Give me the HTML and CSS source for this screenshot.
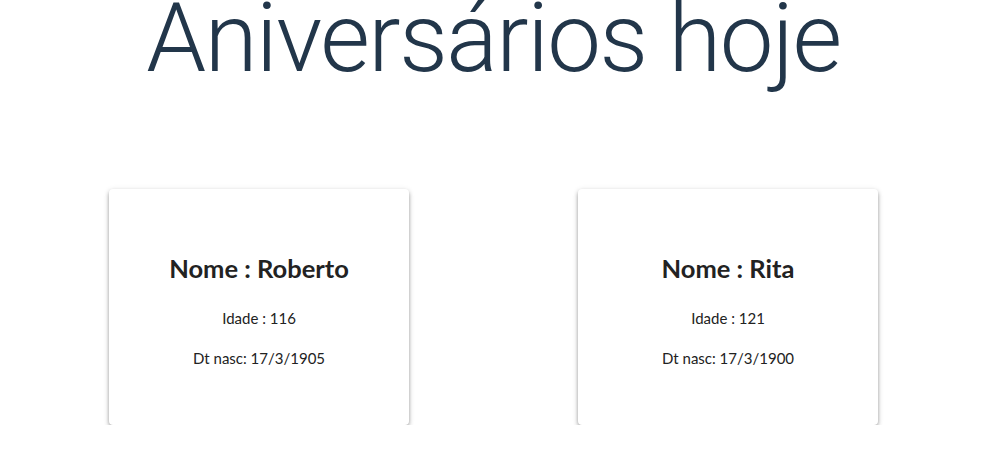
FILE: index.html
```html
<!DOCTYPE html>
<html lang="pt">
<head>
<meta charset="utf-8">
<title>Aniversários hoje</title>
<link rel="stylesheet" href="styles.css">
</head>
<body>
<div class="app">
  <h1 class="title">Aniversários hoje</h1>
  <div class="cards">
    <div class="card">
      <h2 class="card-name">Nome : Roberto</h2>
      <p class="card-line">Idade : 116</p>
      <p class="card-line">Dt nasc: 17/3/1905</p>
    </div>
    <div class="card">
      <h2 class="card-name">Nome : Rita</h2>
      <p class="card-line">Idade : 121</p>
      <p class="card-line">Dt nasc: 17/3/1900</p>
    </div>
  </div>
</div>
</body>
</html>
```

FILE: styles.css
```css
html, body {
  margin: 0;
  padding: 0;
  background: #ffffff;
}
body {
  overflow: hidden;
}
.app {
  width: 987px;
  font-family: Lato, "Open Sans", sans-serif;
  color: #2c3e50;
}
.title {
  margin: 0;
  font-family: Roboto, sans-serif;
  font-weight: 300;
  font-size: 96px;
  line-height: 76px;
  letter-spacing: -1.5px;
  text-align: center;
  color: #22364a;
}
.cards {
  display: flex;
  justify-content: center;
  gap: 169px;
  margin-top: 113px;
}
.card {
  width: 300px;
  height: 236px;
  box-sizing: border-box;
  padding-top: 6px;
  background: #fff;
  border-radius: 4px;
  box-shadow: 0 2px 4px -1px rgba(0,0,0,.35), 0 3px 5px 0 rgba(0,0,0,.14), 0 1px 6px 0 rgba(0,0,0,.1);
  display: flex;
  flex-direction: column;
  align-items: center;
  justify-content: center;
  text-align: center;
  color: #222;
}
.card-name {
  margin: 0 0 25px;
  font-size: 25.5px;
  font-weight: 700;
  line-height: 30px;
  color: #222;
}
.card-line {
  margin: 0;
  font-size: 15px;
  line-height: 20px;
  color: #222;
}
.card-line + .card-line {
  margin-top: 20px;
}
```
